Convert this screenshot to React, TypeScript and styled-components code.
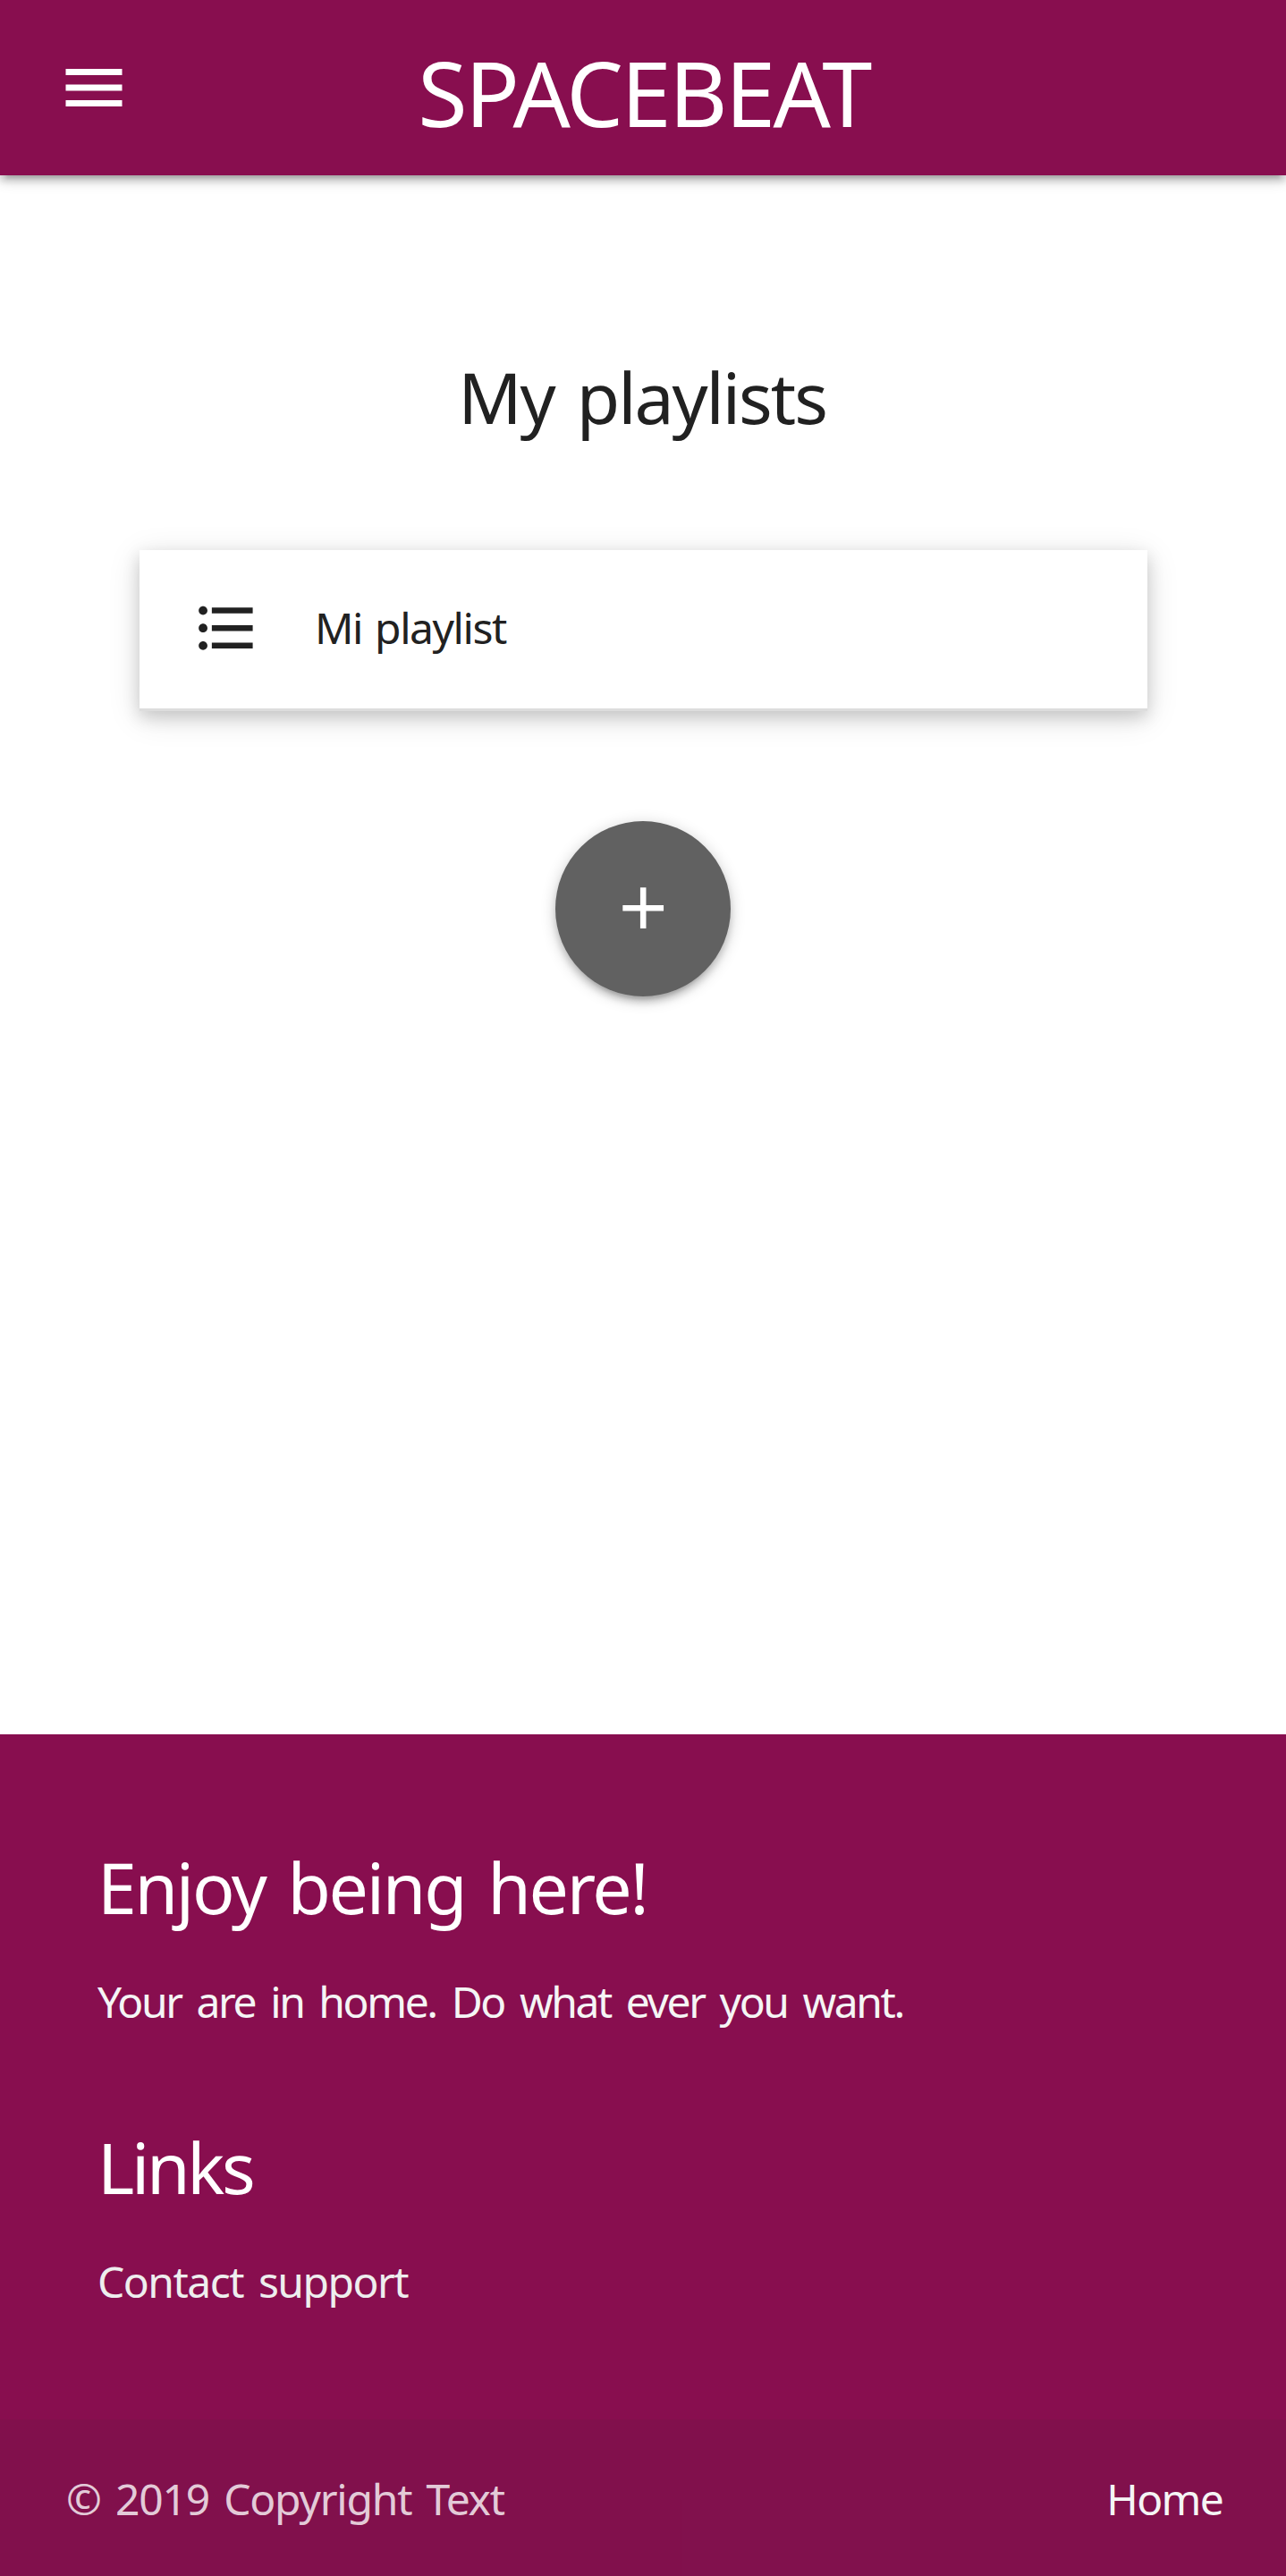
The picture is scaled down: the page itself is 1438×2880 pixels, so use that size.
import React from 'react';
import styled, { createGlobalStyle } from 'styled-components';

const GlobalStyle = createGlobalStyle`
  *, *::before, *::after { box-sizing: border-box; }
  body {
    margin: 0;
    background: #fff;
    color: #212121;
    font-family: "Noto Sans", "Open Sans", sans-serif;
    font-size: 48px;
    font-weight: 400;
  }
  a { color: inherit; text-decoration: none; }
`;

const Page = styled.div`
  min-height: 2880px;
  display: flex;
  flex-direction: column;
`;

const Header = styled.header`
  height: 196px;
  flex: none;
  display: grid;
  grid-template-columns: 1fr auto 1fr;
  background: #880e4f;
  color: #fff;
  box-shadow:
    0 7px 7px 0 rgba(0, 0, 0, 0.14),
    0 10.5px 3.5px -7px rgba(0, 0, 0, 0.12),
    0 3.5px 17.5px 0 rgba(0, 0, 0, 0.2);
`;

const MenuButton = styled.button`
  display: flex;
  align-items: center;
  justify-self: start;
  padding: 0 0 0 62.5px;
  border: 0;
  background: none;
  color: inherit;
  cursor: pointer;
`;

const Icon = styled.svg<{ $size: number }>`
  display: block;
  flex: none;
  width: ${(p) => p.$size}px;
  height: ${(p) => p.$size}px;
  fill: currentColor;
`;

const Brand = styled.a`
  height: 196px;
  padding-left: 2px;
  font-size: 100.84px;
  line-height: 206px;
  letter-spacing: -2.56px;
  white-space: nowrap;
`;

const Main = styled.main`
  flex: 1;
  padding-top: 204px;
  display: flex;
  flex-direction: column;
  align-items: center;
`;

const Heading = styled.h5<{ $tracking: number }>`
  margin: 0;
  font-size: 78.75px;
  font-weight: 400;
  line-height: 87px;
  letter-spacing: ${(p) => p.$tracking}px;
  word-spacing: 6.75px;
  white-space: nowrap;
`;

const PageTitle = styled(Heading)`
  padding-right: 2px;
`;

const PlaylistCard = styled.a`
  width: 1127px;
  height: 180px;
  margin: 128px 0 0 1px;
  padding: 0 58px 2px;
  display: flex;
  align-items: center;
  gap: 59.6px;
  background: #fff;
  border-bottom: 3px solid #ddd;
  box-shadow:
    0 7px 17.5px 0 rgba(0, 0, 0, 0.16),
    0 7px 35px 0 rgba(0, 0, 0, 0.12);
`;

const PlaylistName = styled.span`
  margin-top: -2px;
  line-height: 73px;
  letter-spacing: -1.451px;
  word-spacing: 3.04px;
`;

const AddButton = styled.button`
  width: 196px;
  height: 196px;
  margin-top: 123px;
  padding: 0 0 2px;
  display: flex;
  align-items: center;
  justify-content: center;
  border: 0;
  border-radius: 50%;
  background: #616161;
  color: #fff;
  cursor: pointer;
  box-shadow:
    0 7px 7px 0 rgba(0, 0, 0, 0.14),
    0 10.5px 3.5px -7px rgba(0, 0, 0, 0.12),
    0 3.5px 17.5px 0 rgba(0, 0, 0, 0.2);
`;

const Footer = styled.footer`
  height: 941px;
  flex: none;
  display: flex;
  flex-direction: column;
  background: #880e4f;
  color: #fff;
`;

const FooterBody = styled.div`
  flex: 1;
  padding: 127px 109px 0;
  display: flex;
  flex-direction: column;
  gap: 105px;
`;

const FooterSection = styled.section`
  display: flex;
  flex-direction: column;
  align-items: flex-start;
  gap: 48px;
`;

const FooterText = styled.p`
  margin: 0;
  color: #f5f5f5;
  line-height: 73px;
  letter-spacing: -2.4px;
  word-spacing: 6.82px;
  white-space: nowrap;
`;

const FooterLink = styled.a`
  && { color: #eee; }
  line-height: 73px;
  letter-spacing: -1.525px;
  word-spacing: 5.94px;
`;

const CopyrightBar = styled.div`
  height: 175px;
  padding: 0 71px 0 74px;
  display: flex;
  justify-content: space-between;
  background: rgba(51, 51, 51, 0.08);
  color: rgba(255, 255, 255, 0.8);
  line-height: 177px;
  letter-spacing: -1.229px;
  word-spacing: 5.04px;
`;

const HomeLink = styled.a`
  && { color: #f5f5f5; }
  letter-spacing: -1.729px;
`;

export default function App() {
  return (
    <Page>
      <GlobalStyle />
      <Header>
        <MenuButton aria-label="Menu">
          <Icon $size={84} viewBox="0 0 24 24">
            <path d="M3 18h18v-2H3v2zm0-5h18v-2H3v2zm0-7v2h18V6H3z" />
          </Icon>
        </MenuButton>
        <Brand href="#">SPACEBEAT</Brand>
      </Header>
      <Main>
        <PageTitle $tracking={-2.067}>My playlists</PageTitle>
        <PlaylistCard href="#">
          <Icon $size={78.4} viewBox="0 0 24 24">
            <path d="M4 10.5c-.83 0-1.5.67-1.5 1.5s.67 1.5 1.5 1.5 1.5-.67 1.5-1.5-.67-1.5-1.5-1.5zm0-6c-.83 0-1.5.67-1.5 1.5S3.17 7.5 4 7.5 5.5 6.83 5.5 6 4.83 4.5 4 4.5zm0 12c-.83 0-1.5.68-1.5 1.5s.68 1.5 1.5 1.5 1.5-.68 1.5-1.5-.67-1.5-1.5-1.5zM7 19h14v-2H7v2zm0-6h14v-2H7v2zm0-8v2h14V5H7z" />
          </Icon>
          <PlaylistName>Mi playlist</PlaylistName>
        </PlaylistCard>
        <AddButton aria-label="Add playlist">
          <Icon $size={78.4} viewBox="0 0 24 24">
            <path d="M19 13h-6v6h-2v-6H5v-2h6V5h2v6h6v2z" />
          </Icon>
        </AddButton>
      </Main>
      <Footer>
        <FooterBody>
          <FooterSection>
            <Heading $tracking={-2.293}>Enjoy being here!</Heading>
            <FooterText>Your are in home. Do what ever you want.</FooterText>
          </FooterSection>
          <FooterSection>
            <Heading $tracking={-3.326}>Links</Heading>
            <FooterLink href="#">Contact support</FooterLink>
          </FooterSection>
        </FooterBody>
        <CopyrightBar>
          <span>© 2019 Copyright Text</span>
          <HomeLink href="#">Home</HomeLink>
        </CopyrightBar>
      </Footer>
    </Page>
  );
}
